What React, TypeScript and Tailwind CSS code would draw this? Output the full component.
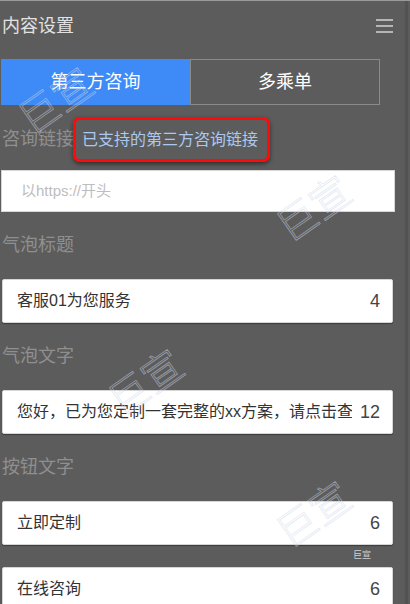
import React from "react";

const font = "font-['Liberation_Sans','Noto_Sans_CJK_SC',sans-serif]";

function Label({ text }: { text: string }) {
  return (
    <div className="h-[67px] flex items-center pl-[2px] text-[18px] text-[#8f8f8f]">{text}</div>
  );
}

function Field({ value, count }: { value: string; count: number }) {
  return (
    <div className="ml-[2px] w-[391px] h-[44px] bg-white border border-[#d6d6d6] rounded-[2px] shadow-[0_1px_1px_rgba(0,0,0,0.35)] flex items-center pl-[14px] pr-[12px]">
      <span className="flex-1 min-w-0 overflow-hidden whitespace-nowrap text-[16px] text-[#333]">{value}</span>
      <span className="pl-[8px] text-[18px] text-[#444]">{count}</span>
    </div>
  );
}

function Mark({ className }: { className: string }) {
  return (
    <div
      className={`absolute pointer-events-none select-none text-[40px] leading-none font-light text-transparent [-webkit-text-stroke:0.8px_rgba(205,215,232,0.55)] rotate-[-35deg] ${className}`}
    >
      巨宣
    </div>
  );
}

export default function App() {
  return (
    <div className={`relative w-[410px] h-[604px] overflow-hidden bg-[#5c5c5c] border-t border-[#9a9a9a] flex ${font}`}>
      <div className="w-[405px] shrink-0">
        <div className="h-[50px] flex items-center justify-between pl-[2px] pr-[12px]">
          <span className="text-[18px] text-[#e2e2e2]">内容设置</span>
          <div className="flex flex-col gap-[4px] w-[17px]">
            <span className="h-[2px] bg-[#b5b5b5]" />
            <span className="h-[2px] bg-[#b5b5b5]" />
            <span className="h-[2px] bg-[#b5b5b5]" />
          </div>
        </div>

        <div className="mt-[8px] ml-[1px] w-[379px] h-[46px] flex">
          <div className="w-[189px] bg-[#3e8bf7] flex items-center justify-center text-[18px] text-white">
            第三方咨询
          </div>
          <div className="flex-1 border border-[#8a8a8a] flex items-center justify-center text-[18px] text-white">
            多乘单
          </div>
        </div>

        <div className="mt-[12px] flex items-center">
          <span className="pl-[2px] w-[73px] text-[18px] text-[#8f8f8f] whitespace-nowrap">咨询链接</span>
          <div className="w-[197px] h-[45px] border-[3px] border-[#ff0a0a] rounded-[7px] shadow-[0_2px_4px_rgba(0,0,0,0.5)] flex items-center pl-[6px]">
            <span className="text-[16px] text-[#a9c9f2] whitespace-nowrap">已支持的第三方咨询链接</span>
          </div>
        </div>

        <div className="mt-[8px] ml-[1px] w-[394px] h-[42px] bg-white border border-[#d6d6d6] flex items-center pl-[19px] text-[15px] text-[#bdbdbd]">
          以https://开头
        </div>

        <Label text="气泡标题" />
        <Field value="客服01为您服务" count={4} />
        <Label text="气泡文字" />
        <Field value="您好，已为您定制一套完整的xx方案，请点击查看" count={12} />
        <Label text="按钮文字" />
        <Field value="立即定制" count={6} />
        <div className="h-[22px] flex items-center justify-end pr-[34px] text-[9px] text-[#d0d0d0]">巨宣</div>
        <Field value="在线咨询" count={6} />
      </div>
      <div className="w-[3px] bg-[#525252]" />

      <Mark className="left-[16px] top-[80px]" />
      <Mark className="left-[274px] top-[188px]" />
      <Mark className="left-[106px] top-[362px]" />
      <Mark className="left-[274px] top-[494px]" />
    </div>
  );
}
